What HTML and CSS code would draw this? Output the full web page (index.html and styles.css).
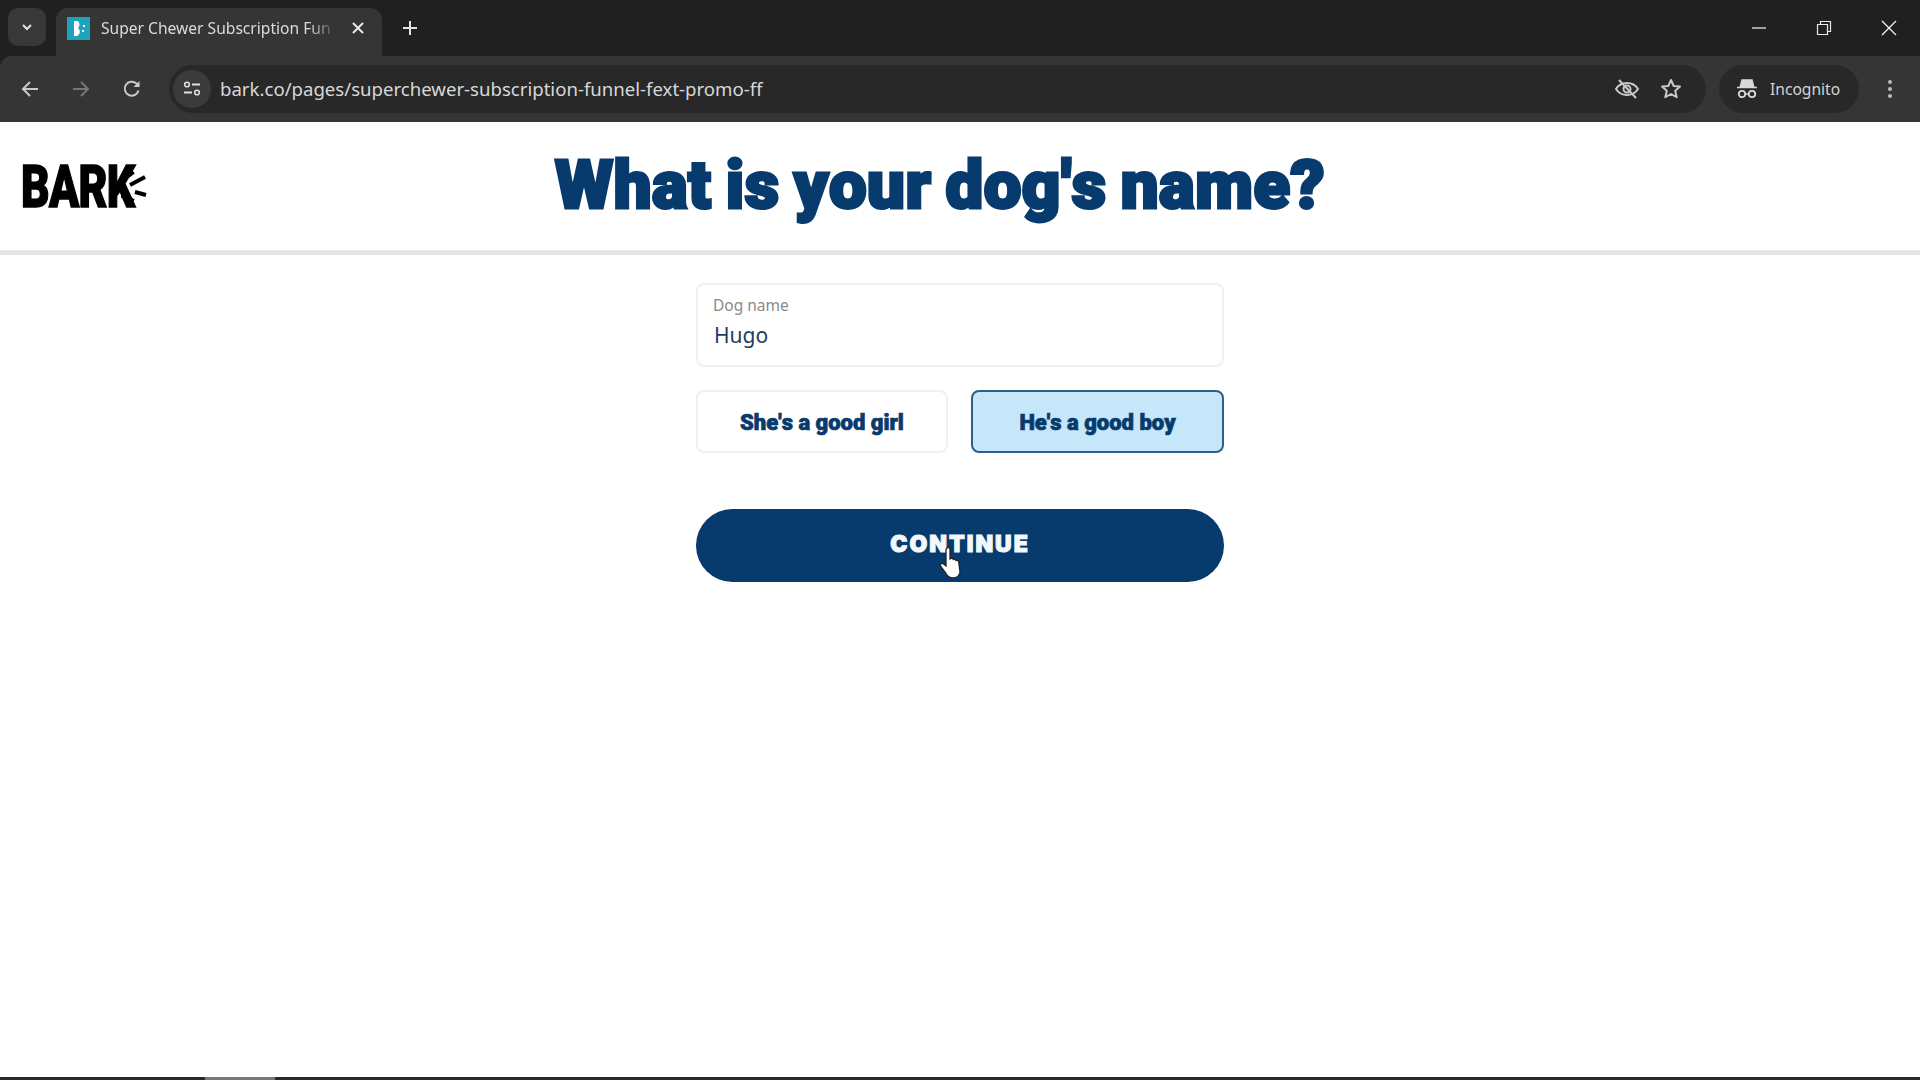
FILE: index.html
```html
<!DOCTYPE html>
<html lang="en">
<head>
<meta charset="utf-8">
<title>Super Chewer Subscription Funnel</title>
<link rel="stylesheet" href="styles.css">
</head>
<body>
<div class="app">
  <div class="tabstrip">
    <div class="tab-search"><svg width="14" height="14" viewBox="0 0 14 14"><path d="M3 5l4 4 4-4" fill="none" stroke="#e3e3e3" stroke-width="2"/></svg></div>
    <div class="tab">
      <svg class="favicon" width="23" height="23" viewBox="0 0 23 23"><rect width="23" height="23" fill="#1ea3bd"/><path d="M7 4h4c2 3 2 5 0 7 3 2 2 7-1 8H7z" fill="#fff"/><path d="M16 8h2v2h-2zM15 13h2v2h-2z" fill="#fff"/></svg>
      <span class="tab-title">Super Chewer Subscription Fun</span>
      <svg class="tab-close" width="14" height="14" viewBox="0 0 14 14"><path d="M2 2l10 10M12 2L2 12" stroke="#e8e8e8" stroke-width="2"/></svg>
    </div>
    <svg class="new-tab" width="16" height="16" viewBox="0 0 16 16"><path d="M8 1v14M1 8h14" stroke="#e3e3e3" stroke-width="2"/></svg>
    <div class="win-controls">
      <svg width="16" height="16" viewBox="0 0 16 16"><path d="M1 8h14" stroke="#e8e8e8" stroke-width="1.3"/></svg>
      <svg width="16" height="16" viewBox="0 0 16 16"><path d="M1.5 4.500h10v10h-10zM4.500 4V1.500h10v10H12" fill="none" stroke="#e8e8e8" stroke-width="1.2"/></svg>
      <svg width="16" height="16" viewBox="0 0 16 16"><path d="M1 1l14 14M15 1L1 15" stroke="#eee" stroke-width="1.4"/></svg>
    </div>
  </div>
  <div class="toolbar">
    <svg class="nav-icon" width="20" height="20" viewBox="0 0 20 20"><path d="M18 10H3M10 3l-7 7 7 7" fill="none" stroke="#c9c9c9" stroke-width="2"/></svg>
    <svg class="nav-icon" width="20" height="20" viewBox="0 0 20 20"><path d="M2 10h15M10 3l7 7-7 7" fill="none" stroke="#767676" stroke-width="2"/></svg>
    <svg class="nav-icon" width="20" height="20" viewBox="0 0 20 20"><path d="M16.500 11.500A7 7 0 1 1 14.500 4.500L17 7" fill="none" stroke="#c9c9c9" stroke-width="2"/><path d="M17.500 2v6h-6z" fill="#c9c9c9"/></svg>
    <div class="omnibox">
      <div class="site-info"><svg width="18" height="16" viewBox="0 0 18 16"><circle cx="4" cy="3.500" r="2.300" fill="none" stroke="#ddd" stroke-width="1.600"/><path d="M9 3.500h8M1 11.500h8" stroke="#ddd" stroke-width="1.800"/><circle cx="14" cy="11.500" r="2.300" fill="none" stroke="#ddd" stroke-width="1.600"/></svg></div>
      <span class="url">bark.co/pages/superchewer-subscription-funnel-fext-promo-ff</span>
      <svg class="omni-icon" width="26" height="22" viewBox="0 0 26 22"><path d="M2 11c5-8 17-8 22 0-5 8-17 8-22 0z" fill="none" stroke="#c8c8c8" stroke-width="2"/><circle cx="13" cy="11" r="3.500" fill="none" stroke="#c8c8c8" stroke-width="2"/><path d="M5 2l17 18" stroke="#c8c8c8" stroke-width="2"/></svg>
      <svg class="omni-icon" width="22" height="22" viewBox="0 0 22 22"><path d="M11 2l2.700 6 6.300.6-4.800 4.200 1.500 6.400L11 16l-5.700 3.200 1.500-6.400L2 8.600 8.300 8z" fill="none" stroke="#c8c8c8" stroke-width="2" stroke-linejoin="round"/></svg>
    </div>
    <div class="profile">
      <svg width="22" height="20" viewBox="0 0 22 20"><path d="M6 1h10l1.500 6h-13zM1 8.500h20" fill="#d8d8d8" stroke="#d8d8d8" stroke-width="1.500"/><circle cx="6" cy="15" r="3.200" fill="none" stroke="#d8d8d8" stroke-width="1.800"/><circle cx="16" cy="15" r="3.200" fill="none" stroke="#d8d8d8" stroke-width="1.800"/><path d="M9 15h4" stroke="#d8d8d8" stroke-width="1.500"/></svg>
      <span class="profile-name">Incognito</span>
    </div>
    <svg class="menu" width="6" height="20" viewBox="0 0 6 20"><circle cx="3" cy="3" r="2" fill="#bbb"/><circle cx="3" cy="10" r="2" fill="#bbb"/><circle cx="3" cy="17" r="2" fill="#bbb"/></svg>
  </div>
  <main class="page">
    <header class="page-header">
      <div class="logo"><span class="logo-word">BARK</span><svg class="logo-rays" width="26" height="40" viewBox="0 0 26 40"><path d="M0 13L12 4M0 27l12 8" stroke="#000" stroke-width="6"/><path d="M9 18l15-8M14 25l11 3" stroke="#000" stroke-width="4"/></svg></div>
      <h1 class="headline">What is your dog's name?</h1>
    </header>
    <form class="form">
      <div class="field">
        <span class="field-label">Dog name</span>
        <span class="field-value">Hugo</span>
      </div>
      <div class="choices">
        <div class="choice">She's a good girl</div>
        <div class="choice choice-active">He's a good boy</div>
      </div>
      <div class="continue">CONTINUE
        <svg class="cursor" width="24" height="33" viewBox="0 0 24 33"><path d="M8 2c1.500-1 3-.5 3 1.500V13l1-.5c1-.5 2 0 2.300 1 1-.7 2.400-.3 2.700 1 1-.5 2.500 0 2.700 1.500L21 26c-.5 3-3 6-7 6-3.500 0-6-2-8-6l-4.500-6c-1-1.500 1-3.500 3-2L7 20V4c0-1 .5-1.500 1-2z" fill="#fff" stroke="#222" stroke-width="1.300"/></svg>
      </div>
    </form>
  </main>
  <div class="taskbar"><div class="taskbar-thumb"></div></div>
</div>
</body>
</html>
```
FILE: styles.css
```css
* { box-sizing: border-box; }
html, body { margin: 0; height: 100%; background: #fff; overflow: hidden; }
.app { width: 1920px; height: 1080px; display: flex; flex-direction: column; background: #202020; font-family: "Noto Sans", "Open Sans", sans-serif; }

.tabstrip { height: 56px; background: #202020; display: flex; align-items: flex-start; padding: 8px 0 0 8px; flex: none; }
.tab-search { width: 38px; height: 38px; background: #383838; border-radius: 10px; display: flex; align-items: center; justify-content: center; }
.tab { width: 326px; height: 48px; margin-left: 10px; background: #353535; border-radius: 12px 12px 0 0; display: flex; align-items: center; padding: 0 12px 8px 11px; }
.favicon { flex: none; }
.tab-title { width: 236px; margin-left: 11px; color: #dcdcdc; font-size: 15.6px; white-space: nowrap; font-family: "Noto Sans", sans-serif; -webkit-mask-image: linear-gradient(to right, #000 88%, transparent 100%); mask-image: linear-gradient(to right, #000 88%, transparent 100%); }
.tab-close { margin-left: 14px; flex: none; }
.new-tab { margin: 12px 0 0 20px; }
.win-controls { margin-left: auto; display: flex; gap: 49px; padding: 12px 23px 0 0; }

.toolbar { height: 66px; background: #353535; display: flex; align-items: center; flex: none; padding: 0 0 0 20px; border-radius: 12px 0 0 0; }
.nav-icon { margin-right: 31px; flex: none; }
.nav-icon:nth-child(3) { margin-right: 27px; }
.omnibox { width: 1537px; height: 48px; background: #282828; border-radius: 24px; display: flex; align-items: center; padding: 0 24px 0 4px; flex: none; }
.site-info { width: 38px; height: 38px; background: #3b3b3b; border-radius: 50%; display: flex; align-items: center; justify-content: center; flex: none; }
.url { margin-left: 9px; padding-bottom: 2px; color: #d8d8d8; font-size: 18.6px; flex: 1; white-space: nowrap; }
.omni-icon { margin-left: 20px; flex: none; }
.profile { width: 140px; height: 48px; margin-left: 13px; background: #282828; border-radius: 24px; display: flex; align-items: center; padding-left: 17px; flex: none; }
.profile-name { margin-left: 12px; padding-bottom: 1px; color: #d4d4d4; font-size: 15.6px; }
.menu { margin-left: 28px; flex: none; }

.page { flex: 1; background: #fff; min-height: 0; }
.page-header { height: 133px; border-bottom: 5px solid #e6e6e6; position: relative; display: flex; align-items: center; justify-content: center; }
.logo { position: absolute; left: 21px; top: 42px; display: flex; align-items: center; }
.logo-word { font-family: "Roboto", sans-serif; font-weight: 900; font-size: 60px; line-height: 46px; color: #000; transform-origin: left center; transform: scaleX(.74); width: 100px; -webkit-text-stroke: 1.5px #000; letter-spacing: -1px; }
.logo-rays { margin-left: 0; }
.headline { margin: 0 0 3px 0; transform: translateX(-20px); font-family: "Roboto", sans-serif; font-weight: 900; font-size: 67px; line-height: 80px; color: #073a6d; white-space: nowrap; -webkit-text-stroke: 3px #073a6d; font-kerning: none; letter-spacing: .5px; word-spacing: -3px; }

.form { width: 528px; margin: 28px auto 0; display: flex; flex-direction: column; }
.field { height: 84px; border: 2px solid #eef0f2; border-radius: 8px; display: flex; flex-direction: column; padding: 9px 0 0 15px; }
.field-label { font-size: 15.5px; line-height: 22px; color: #8a8a8a; }
.field-value { font-size: 21px; line-height: 32px; color: #1d4060; margin-top: 3px; padding-left: 1px; }
.choices { display: grid; grid-template-columns: 252px 253px; gap: 23px; margin-top: 23px; }
.choice { height: 63px; border: 2px solid #eef0f2; border-radius: 8px; display: flex; align-items: center; justify-content: center; padding-top: 1px; font-family: "Roboto", sans-serif; font-weight: 900; font-size: 22px; font-kerning: none; color: #073a6d; -webkit-text-stroke: .7px #073a6d; }
.choice-active { background: #c6e6fa; border-color: #2e5f85; }
.continue { position: relative; height: 73px; margin-top: 56px; background: #073a6d; border-radius: 37px; display: flex; align-items: center; justify-content: center; color: #f2f8fb; font-family: "Inter", sans-serif; font-weight: 900; font-size: 23px; letter-spacing: 2px; padding-bottom: 4px; -webkit-text-stroke: 1px #f2f8fb; }
.cursor { position: absolute; left: 243px; top: 37px; }

.taskbar { height: 3px; background: #2a2a2a; flex: none; padding-left: 205px; }
.taskbar-thumb { width: 70px; height: 3px; background: #777; }
```
